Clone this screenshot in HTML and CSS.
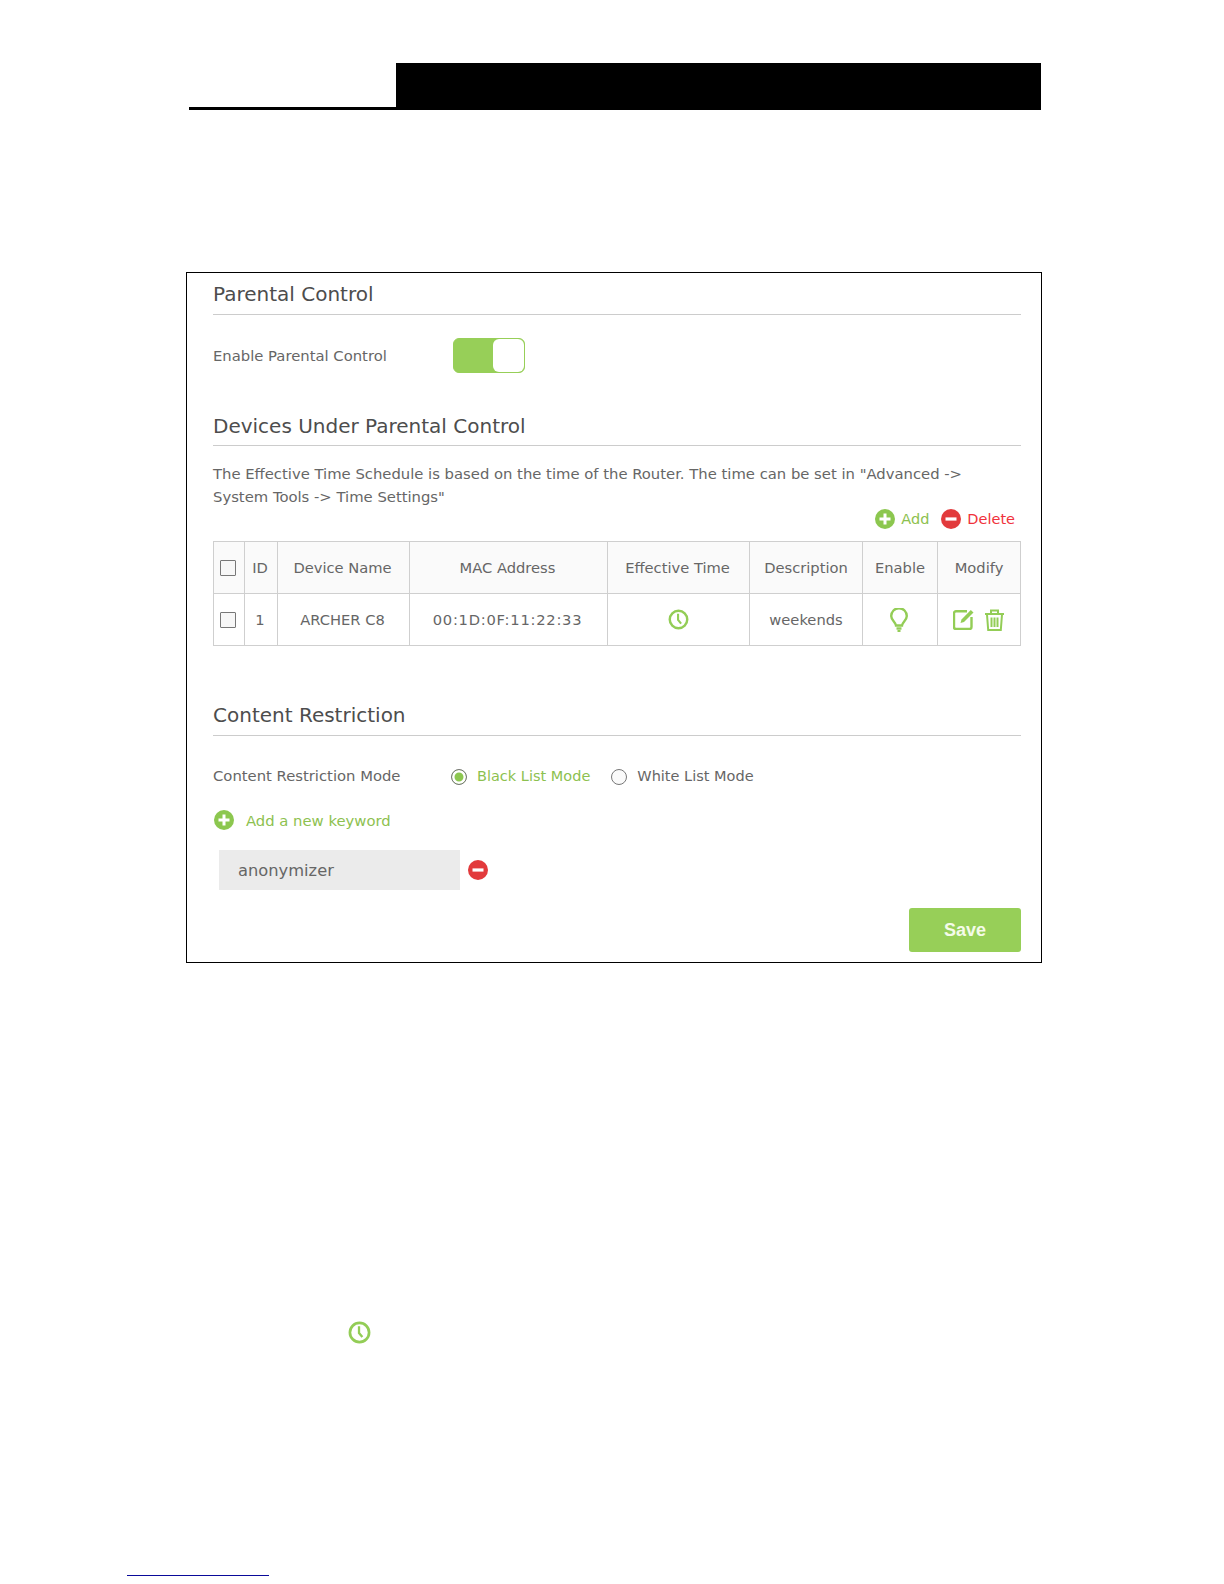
FILE: index.html
```html
<!DOCTYPE html>
<html lang="en">
<head>
<meta charset="utf-8">
<title>Parental Control</title>
<link rel="stylesheet" href="styles.css">
</head>
<body>
<svg class="defs" width="0" height="0" aria-hidden="true">
  <symbol id="clock" viewBox="0 0 24 24"><circle cx="12" cy="12" r="10" fill="none" stroke="currentColor" stroke-width="2.8"/><path d="M11.500 5.500v7l3.500 4.200" fill="none" stroke="currentColor" stroke-width="2.400"/></symbol>
  <symbol id="plus" viewBox="0 0 20 20"><circle cx="10" cy="10" r="10" fill="currentColor"/><path d="M10 4.500v11M4.500 10h11" stroke="#fff" stroke-width="3"/></symbol>
  <symbol id="minus" viewBox="0 0 20 20"><circle cx="10" cy="10" r="10" fill="currentColor"/><path d="M4.500 10h11" stroke="#fff" stroke-width="3.200"/></symbol>
</svg>
<header class="top">
  <div class="top-rule"></div>
  <div class="top-bar"></div>
</header>
<main class="panel">
  <h2 class="title">Parental Control</h2>
  <div class="row enable-row">
    <span class="label">Enable Parental Control</span>
    <span class="toggle"><span class="knob"></span></span>
  </div>
  <h2 class="title devices">Devices Under Parental Control</h2>
  <p class="note">The Effective Time Schedule is based on the time of the Router. The time can be set in "Advanced -&gt;<br>System Tools -&gt; Time Settings"</p>
  <div class="actions">
    <span class="action add"><svg class="ico20"><use href="#plus"/></svg>Add</span>
    <span class="action del"><svg class="ico20"><use href="#minus"/></svg>Delete</span>
  </div>
  <table class="grid">
    <colgroup>
      <col class="c1"><col class="c2"><col class="c3"><col class="c4"><col class="c5"><col class="c6"><col class="c7"><col class="c8">
    </colgroup>
    <thead>
      <tr>
        <th><span class="check"></span></th><th>ID</th><th>Device Name</th><th>MAC Address</th><th>Effective Time</th><th>Description</th><th>Enable</th><th>Modify</th>
      </tr>
    </thead>
    <tbody>
      <tr>
        <td><span class="check"></span></td><td>1</td><td>ARCHER C8</td><td class="mac">00:1D:0F:11:22:33</td>
        <td class="time"><svg class="clock"><use href="#clock"/></svg></td>
        <td>weekends</td>
        <td class="lamp"><svg class="bulb" viewBox="0 0 18 24"><path d="M6 17.500C5.700 14 1.200 12.500 1.200 8a7.800 7.800 0 0 1 15.600 0c0 4.500-4.500 6-4.800 9.500z" fill="none" stroke="currentColor" stroke-width="2.400"/><path d="M6.500 20.500h5" stroke="currentColor" stroke-width="2.400"/><path d="M7.500 23h3" stroke="currentColor" stroke-width="2"/></svg></td>
        <td class="mod">
          <svg class="edit" viewBox="0 0 21 21"><path d="M14 2.200H3a2 2 0 0 0-2 2V18a2 2 0 0 0 2 2h13.500a2 2 0 0 0 2-2V8" fill="none" stroke="currentColor" stroke-width="2.400"/><path d="M7.500 14l1-3.500L17.800 1 20.500 3.500 11 13z" fill="currentColor"/></svg>
          <svg class="trash" viewBox="0 0 21 22"><path d="M1 5h19M7 4.500V1.500h7V4.500M3 5.500l1.200 15.500h12.600L18 5.500M7.500 8.500v9.500M10.500 8.500v9.500M13.500 8.500v9.500" fill="none" stroke="currentColor" stroke-width="2"/></svg>
        </td>
      </tr>
    </tbody>
  </table>
  <h2 class="title content">Content Restriction</h2>
  <div class="row mode-row">
    <span class="label">Content Restriction Mode</span>
    <span class="radio on"></span><span class="radio-text on-text">Black List Mode</span>
    <span class="radio off"></span><span class="radio-text">White List Mode</span>
  </div>
  <div class="new-key"><svg class="ico20"><use href="#plus"/></svg>Add a new keyword</div>
  <div class="key-row">
    <span class="key">anonymizer</span>
    <svg class="ico20 red"><use href="#minus"/></svg>
  </div>
  <div class="save-row"><button class="save" type="button">Save</button></div>
</main>
<div class="loose-clock"><svg class="clock big"><use href="#clock"/></svg></div>
<div class="foot-rule"></div>
</body>
</html>
```

FILE: styles.css
```css
html, body { margin: 0; padding: 0; background: #fff; }
body { width: 1224px; height: 1584px; overflow: hidden; font-family: "DejaVu Sans", Verdana, sans-serif; color: #666; }
.defs { display: block; height: 0; }

.top { display: flex; align-items: flex-end; margin: 63px 0 0 189px; width: 852px; height: 47px; }
.top-rule { width: 207px; height: 3px; background: #000; }
.top-bar { flex: 1; height: 47px; background: #000; }

.panel { box-sizing: border-box; width: 856px; height: 691px; margin: 162px 0 0 186px; border: 1px solid #000; padding: 0 20px 0 26px; }

.title { box-sizing: content-box; margin: 0; font-size: 20px; font-weight: 400; color: #4d4d4d; line-height: 28px; height: 28px; padding: 7px 0 6px; border-bottom: 1px solid #ccc; }
.devices { margin-top: 39px; padding-top: 0; padding-bottom: 5px; }
.content { margin-top: 55px; padding-top: 0; padding-bottom: 6px; }

.row { display: flex; align-items: center; }
.label { font-size: 14.800px; color: #666; }
.enable-row { height: 35px; margin-top: 23px; }
.enable-row .label { width: 240px; }
.toggle { box-sizing: border-box; display: block; width: 72px; height: 35px; background: #97cf58; border: 1px solid #97cf58; border-radius: 6px; padding-left: 39px; }
.knob { display: block; width: 31px; height: 33px; background: #fff; border-radius: 6px; }

.note { margin: 16px 0 0; font-size: 14.800px; line-height: 23px; color: #666; }
.actions { display: flex; justify-content: flex-end; gap: 12px; padding-right: 6px; height: 22px; align-items: center; }
.action { display: flex; align-items: center; gap: 6px; font-size: 14.500px; }
.add { color: #8dc14f; }
.del { color: #f0323c; }
.add .ico20 { color: #8cc74f; }
.del .ico20 { color: #e23a3c; }
.ico20 { width: 20px; height: 20px; display: block; flex: none; }
.red { color: #e23a3c; }

.grid { border-collapse: collapse; table-layout: fixed; width: 807px; margin-top: 11px; }
.c1 { width: 31px; } .c2 { width: 33px; } .c3 { width: 132px; } .c4 { width: 198px; }
.c5 { width: 142px; } .c6 { width: 113px; } .c7 { width: 75px; } .c8 { width: 83px; }
.grid th, .grid td { border: 1px solid #cfcfcf; height: 51px; padding: 0; text-align: center; font-size: 14.700px; font-weight: 400; color: #666; vertical-align: middle; }
.grid th:nth-child(-n+5), .grid td:nth-child(-n+4) { padding-right: 2px; }
.grid td.lamp { padding-right: 2px; }
.grid th { background: #fafafa; }
.grid .mac { letter-spacing: 0.750px; }
.check { box-sizing: border-box; display: block; width: 16px; height: 16px; margin: 0 auto; background: #f7f7f7; border: 1px solid #777; border-radius: 1px; }
.clock { width: 21px; height: 21px; color: #93cd56; display: block; margin: 0 auto; }
.bulb { width: 18px; height: 24px; color: #93cd56; display: block; margin: 0 auto; }
.mod { white-space: nowrap; }
.edit { width: 21px; height: 21px; color: #93cd56; }
.trash { width: 21px; height: 22px; color: #93cd56; margin-left: 5px; }
.mod svg { vertical-align: middle; }

.mode-row { margin-top: 27px; height: 24px; }
.mode-row .label { width: 238px; }
.radio { box-sizing: border-box; display: block; width: 16px; height: 16px; border-radius: 50%; border: 1px solid #777; background: #fafafa; flex: none; margin-top: 3px; }
.radio.on { background: #8cc74f; box-shadow: inset 0 0 0 2.500px #fff; }
.radio-text { font-size: 14.500px; margin-left: 10px; margin-right: 21px; padding-top: 2px; color: #666; }
.on-text { color: #8dc14f; }

.new-key { display: flex; align-items: center; gap: 12px; margin-top: 21px; height: 24px; font-size: 14.800px; color: #8dc14f; }
.new-key .ico20 { color: #8cc74f; margin-left: 1px; }

.key-row { display: flex; align-items: center; gap: 8px; margin: 18px 0 0 6px; }
.key { box-sizing: border-box; display: block; width: 241px; height: 40px; line-height: 42px; padding-left: 19px; background: #ebebeb; font-size: 16.300px; color: #666; }

.save-row { display: flex; justify-content: flex-end; margin-top: 18px; }
.save { width: 112px; height: 44px; border: 0; border-radius: 3px; background: #97cf58; color: #f4fbe9; font: 700 18px "Liberation Sans", Arial, sans-serif; padding: 0; }

.loose-clock { margin: 358px 0 0 348px; height: 23px; }
.big { width: 23px; height: 23px; margin: 0; }
.foot-rule { width: 142px; height: 1px; background: #0a0a9a; margin: 231px 0 0 127px; }
```
